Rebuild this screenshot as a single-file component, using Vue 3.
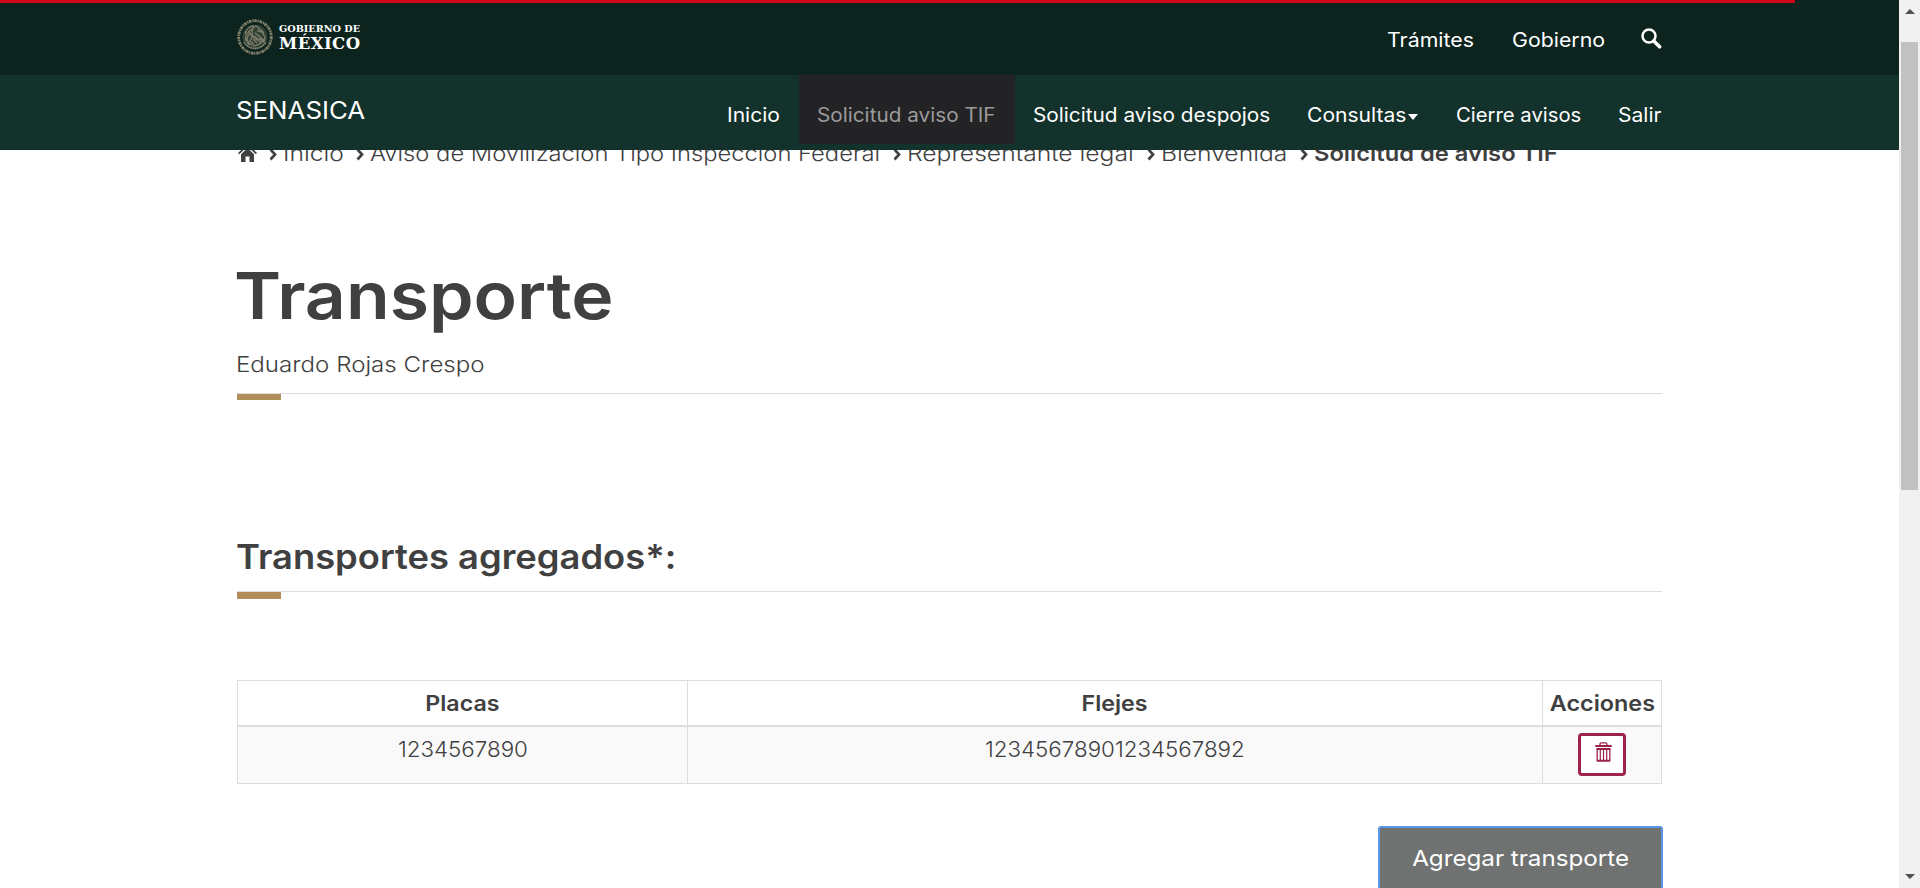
<script setup>
const navItems = [
  { label: 'Inicio', cls: 'n-inicio' },
  { label: 'Solicitud aviso TIF', cls: 'n-tif', active: true },
  { label: 'Solicitud aviso despojos', cls: 'n-despojos' },
  { label: 'Consultas', cls: 'n-consultas', caret: true },
  { label: 'Cierre avisos', cls: 'n-cierre' },
  { label: 'Salir', cls: 'n-salir' },
]
const crumbs = [
  { label: 'Inicio', cls: 'c-inicio' },
  { label: 'Aviso de Movilización Tipo Inspección Federal', cls: 'c-aviso' },
  { label: 'Representante legal', cls: 'c-rep' },
  { label: 'Bienvenida', cls: 'c-bien' },
  { label: 'Solicitud de aviso TIF', cls: 'c-actual' },
]
const rows = [{ placas: '1234567890', flejes: '12345678901234567892' }]
</script>

<template>
  <div class="screen">
    <div class="page">
      <header class="header">
        <div class="progress"></div>
        <div class="gob">
          <div class="container bar">
            <svg class="logo" width="126" height="40" viewBox="0 0 126 40">
              <circle cx="18" cy="20" r="12.500" fill="#96927a" opacity=".28" />
              <g fill="none" stroke="#96927a">
                <circle cx="18" cy="20" r="16.300" stroke-width="2.800" stroke-dasharray="2.600 .8 1.400 .6" opacity=".85" />
                <path d="M8 17c1-5 5-8 9-8M9 24c-1-4 1-8 4-10M12 28c-3-4-2-9 1-12l2 4-2 4 4 3M16 11l3-2 3 2-1 3 4 1 3 5-1 5-4-3-3 1-4-3-1-5zM18 16l4 3 4 4M17 19l4 3 3 4M16 22l4 4M9 22l4 5 5 2 6-3 3-4M23 12l4 4M11 15l4-3" stroke-width="1.300" opacity=".75" />
                <path d="M7 25c4 8 17 9 22 0" stroke-width="1.500" stroke-dasharray="1.500 .7" />
              </g>
              <text x="42" y="15.200" font-size="9.500" textLength="81" lengthAdjust="spacingAndGlyphs">GOBIERNO DE</text>
              <text x="42" y="32" font-size="16.500" textLength="81" lengthAdjust="spacing">MÉXICO</text>
            </svg>
            <nav class="topnav">
              <a class="t-tramites"><span>Trámites</span></a>
              <a class="t-gobierno"><span>Gobierno</span></a>
              <svg class="search" width="21" height="21" viewBox="0 0 21 21">
                <circle cx="8" cy="8" r="6.500" fill="none" stroke="#fff" stroke-width="2.500" />
                <path d="M12.800 13l5.800 5.800" stroke="#fff" stroke-width="3.600" stroke-linecap="round" />
              </svg>
            </nav>
          </div>
        </div>
        <div class="sub">
          <div class="container bar">
            <a class="brand"><span>SENASICA</span></a>
            <nav class="menu">
              <a v-for="n in navItems" :key="n.label" class="item" :class="[n.cls, { active: n.active }]">
                <span>{{ n.label }}</span><i v-if="n.caret" class="caret"></i>
              </a>
            </nav>
          </div>
        </div>
      </header>

      <main class="container content">
        <div class="crumbs">
          <svg class="home" width="19" height="18" viewBox="0 0 19 18">
            <path d="M9.500 0L0 9l1.200 1.200L9.500 2.400l8.300 7.800L19 9l-3-2.900V1.500h-2.500v2.300z" fill="#404041" />
            <path d="M9.500 4L3 10.200V18h4.500v-5.500h4V18H16v-7.800z" fill="#404041" />
          </svg>
          <template v-for="c in crumbs" :key="c.label">
            <svg class="chev" width="8" height="13" viewBox="0 0 8 13">
              <path d="M1.500 1.500l4.600 5-4.600 5" fill="none" stroke="#404041" stroke-width="2.600" />
            </svg>
            <a class="crumb" :class="c.cls"><span>{{ c.label }}</span></a>
          </template>
        </div>

        <h1><span>Transporte</span></h1>
        <p class="user"><span>Eduardo Rojas Crespo</span></p>
        <div class="rule"></div>

        <h3><span>Transportes agregados*:</span></h3>
        <div class="rule second"></div>

        <table>
          <thead>
            <tr>
              <th class="w-placas"><span>Placas</span></th>
              <th class="w-flejes"><span>Flejes</span></th>
              <th class="w-acc"><span>Acciones</span></th>
            </tr>
          </thead>
          <tbody>
            <tr v-for="r in rows" :key="r.placas">
              <td class="num"><span>{{ r.placas }}</span></td>
              <td class="num"><span>{{ r.flejes }}</span></td>
              <td>
                <button class="del" aria-label="Eliminar">
                  <svg width="17" height="20" viewBox="0 0 17 20" fill="none" stroke="#9d2449">
                    <path d="M5 3.500V2.200Q5 .8 6.500 .8h4Q12 .8 12 2.200v1.300" stroke-width="1.300" />
                    <path d="M.3 4h16.400" stroke-width="2" />
                    <path d="M1.500 7h14M1.800 18.800h13.400" stroke-width="2" />
                    <path d="M2.200 7v12M14.800 7v12" stroke-width="1.300" />
                    <path d="M5.300 7v12M8.500 7v12M11.700 7v12" stroke-width="1.200" />
                  </svg>
                </button>
              </td>
            </tr>
          </tbody>
        </table>

        <div class="actions">
          <button class="add"><span>Agregar transporte</span></button>
        </div>
      </main>
    </div>

    <aside class="scrollbar">
      <i class="arrow up"></i>
      <div class="thumb"></div>
      <i class="arrow down"></i>
    </aside>
  </div>
</template>

<style>
html, body { margin: 0; overflow: hidden; }
</style>

<style scoped>
* { box-sizing: border-box; }
/* Inter is widened per label to get the proportions of a geometric sans */
span { display: inline-block; white-space: nowrap; transform: scaleX(var(--w, 1)); transform-origin: left; }
th span, td span, .add span { transform-origin: center; }
.screen { display: flex; width: 1920px; height: 888px; overflow: hidden; background: #fff; font-family: Inter, "Open Sans", sans-serif; color: #404041; }
.page { width: 1899px; height: 888px; overflow: hidden; position: relative; }
.container { width: 1425px; margin: 0 auto; }
.header { height: 150px; position: relative; z-index: 2; }
.progress { position: absolute; left: 0; top: 0; width: 1795px; height: 3px; background: #d0021b; }
.gob { height: 75px; background: #0c231e; }
.sub { height: 75px; background: #13322b; }
.bar { display: flex; justify-content: space-between; height: 75px; }
.logo { margin-top: 17px; }
.logo text { font-family: "DejaVu Serif", serif; font-weight: 700; fill: #fff; }
.topnav { display: flex; color: #fff; font-size: 19.5px; line-height: 30px; padding-top: 25px; }
.t-tramites { width: 125px; --w: 1.096; }
.t-gobierno { width: 129px; --w: 1.093; }
.search { margin-top: 3px; }
.brand { color: #fff; font-size: 24.5px; line-height: 36px; --w: 1.055; padding-top: 17px; margin-left: -1px; }
.menu { display: flex; color: #fff; font-size: 19.5px; line-height: 30px; margin-right: -19px; }
.item { display: flex; height: 69px; padding: 25px 0 0 18px; }
.active { background: #232325; color: #9b9b9b; }
.n-inicio { width: 90px; --w: 1.08; }
.n-tif { width: 216px; --w: 1.063; }
.n-despojos { width: 274px; --w: 1.066; }
.n-consultas { width: 149px; --w: 1.08; }
.n-cierre { width: 162px; --w: 1.04; }
.n-salir { width: 81px; --w: 1.08; }
.caret { margin: 14px 0 0 9px; width: 0; height: 0; border: 5px solid transparent; border-top: 6px solid #fff; border-bottom: 0; }
.crumbs { display: flex; height: 32px; margin-top: -12px; font-size: 22px; line-height: 30px; font-weight: 300; white-space: nowrap; }
.home { margin: 6px 12px 0 1px; }
.chev { margin: 10px 7px 0 0; flex: none; }
.crumb span { margin-left: -1px; }
.c-inicio { width: 72px; --w: 1.12; }
.c-aviso { width: 522px; --w: 1.079; }
.c-rep { width: 239px; --w: 1.12; }
.c-bien { width: 138px; --w: 1.12; }
.c-actual { font-weight: 600; --w: 1.078; }
h1 { margin: 86px 0 0 -3px; font-size: 65px; line-height: 80px; font-weight: 600; --w: 1.1; }
.user { margin: 13px 0 0 -1px; font-size: 22px; line-height: 30px; font-weight: 300; --w: 1.096; }
.rule { margin-top: 14px; height: 1px; background: #ddd; position: relative; }
.rule::after { content: ""; position: absolute; left: 0; top: 1px; width: 44px; height: 6px; background: #b38e5d; }
h3 { margin: 143px 0 0 -1px; font-size: 34px; line-height: 40px; font-weight: 600; --w: 1.069; }
.second { margin-top: 14px; }
.second::after { height: 7px; }
table { width: 1425px; margin-top: 88px; border-collapse: collapse; table-layout: fixed; text-align: center; font-size: 22px; }
th, td { border: 1px solid #ddd; padding: 0; }
th { height: 45px; font-size: 21.500px; line-height: 30px; font-weight: 600; border-bottom-width: 2px; --w: 1.08; }
td { height: 58px; background: #f9f9f9; vertical-align: top; font-weight: 300; }
.w-placas { width: 450px; }
.w-flejes { width: 855px; }
.w-acc { width: 119px; --w: 1.088; }
.num { line-height: 30px; padding-top: 7px; --w: 1.016; }
.del { display: flex; align-items: flex-start; width: 48px; height: 43px; margin: 6px auto 0; padding: 6px 0 0 14px; background: #fff; border: 3px solid #9d2449; border-radius: 4px; }
.actions { display: flex; justify-content: flex-end; margin: 42px -1px 0 0; }
.add { width: 285px; height: 64px; border: 2px solid #5c94e8; border-radius: 3px 3px 0 0; background: #6f7271; color: #fff; font: 400 22px/30px Inter, sans-serif; --w: 1.1; padding: 0; }
.scrollbar { width: 21px; height: 888px; background: #f1f1f1; display: flex; flex-direction: column; align-items: center; }
.arrow { width: 0; height: 0; border: 5px solid transparent; }
.up { margin-top: 9px; border-top: 0; border-bottom: 5px solid #505050; }
.thumb { margin-top: 28px; width: 17px; height: 448px; background: #c1c1c1; }
.down { margin-top: auto; margin-bottom: 9px; border-bottom: 0; border-top: 5px solid #505050; }
</style>
